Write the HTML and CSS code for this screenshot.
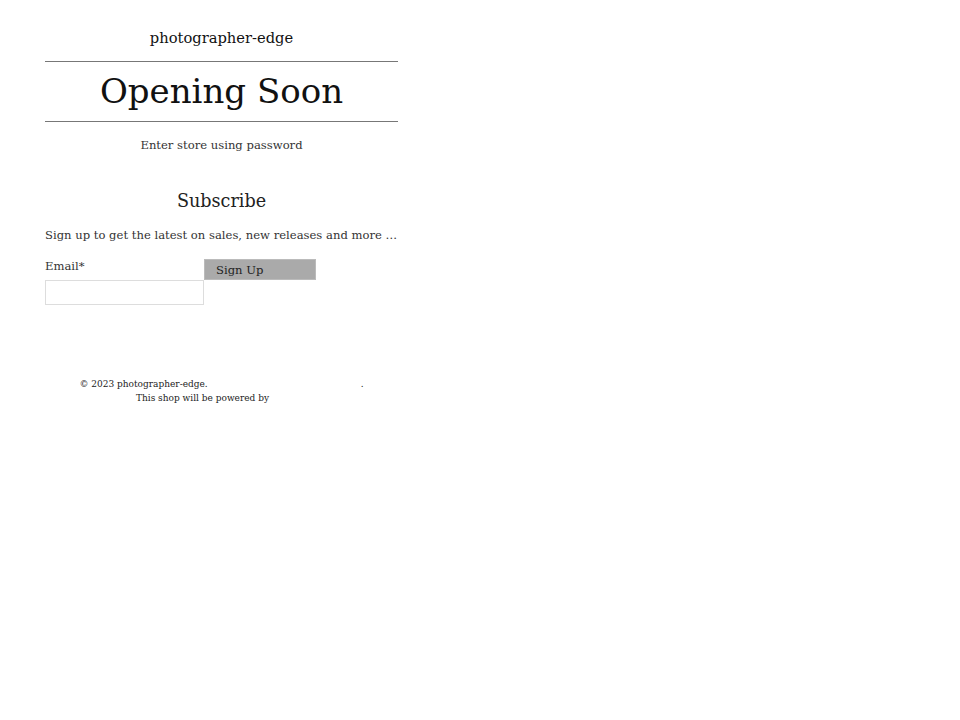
FILE: index.html
```html
<!DOCTYPE html>
<html>
<head>
<meta charset="utf-8">
<link rel="stylesheet" href="styles.css">
</head>
<body>
<main class="page">
  <header class="header">
    <div class="store-name">photographer-edge</div>
    <h1 class="title">Opening Soon</h1>
  </header>
  <p class="enter">Enter store using password</p>
  <section class="subscribe">
    <h2 class="sub-title">Subscribe</h2>
    <p class="sub-text">Sign up to get the latest on sales, new releases and more …</p>
    <form class="form">
      <label class="field">
        <span class="label">Email*</span>
        <input class="input" type="email">
      </label>
      <button class="btn" type="button">Sign Up</button>
    </form>
  </section>
  <footer class="footer">
    <div class="foot-line">© 2023 photographer-edge.<span class="gap-a"></span>.</div>
    <div class="foot-line">This shop will be powered by<span class="gap-b"></span></div>
  </footer>
</main>
</body>
</html>
```
FILE: styles.css
```css
html, body {
  margin: 0;
  padding: 0;
  background: #fff;
}
body {
  font-family: "DejaVu Serif", serif;
  color: #222;
}
.page {
  width: 353px;
  margin-left: 45px;
  padding-top: 28px;
}
.header {
  text-align: center;
}
.store-name {
  font-size: 14.7px;
  line-height: 20px;
  color: #111;
  padding-bottom: 13px;
  border-bottom: 1px solid #777;
}
.title {
  margin: 0;
  font-weight: normal;
  font-size: 34px;
  line-height: 59px;
  color: #111;
  border-bottom: 1px solid #777;
}
.enter {
  margin: 14px 0 0;
  text-align: center;
  font-size: 11.6px;
  line-height: 18px;
  color: #333;
}
.subscribe {
  margin-top: 34px;
}
.sub-title {
  margin: 0;
  text-align: center;
  font-weight: normal;
  font-size: 17.6px;
  line-height: 26px;
  color: #222;
}
.sub-text {
  margin: 12px 0 0;
  font-size: 11.6px;
  line-height: 18px;
  color: #333;
  white-space: nowrap;
}
.form {
  display: flex;
  align-items: flex-start;
  margin-top: 14px;
}
.field {
  display: flex;
  flex-direction: column;
}
.label {
  font-size: 11.6px;
  line-height: 16px;
  color: #333;
}
.input {
  margin: 6px 0 0;
  width: 159px;
  height: 25px;
  box-sizing: border-box;
  border: 1px solid #ddd;
  padding: 0;
  font: inherit;
}
.btn {
  margin-top: 1px;
  width: 112px;
  height: 21px;
  box-sizing: border-box;
  background: #aaa;
  border: 1px solid #bbb;
  text-align: left;
  padding: 0 0 0 11px;
  font-family: "DejaVu Serif", serif;
  font-size: 11.6px;
  color: #222;
}
.footer {
  margin-top: 72px;
  text-align: center;
  font-size: 9px;
  line-height: 14px;
  color: #222;
}
.gap-a {
  display: inline-block;
  width: 153px;
}
.gap-b {
  display: inline-block;
  width: 38px;
}
```
